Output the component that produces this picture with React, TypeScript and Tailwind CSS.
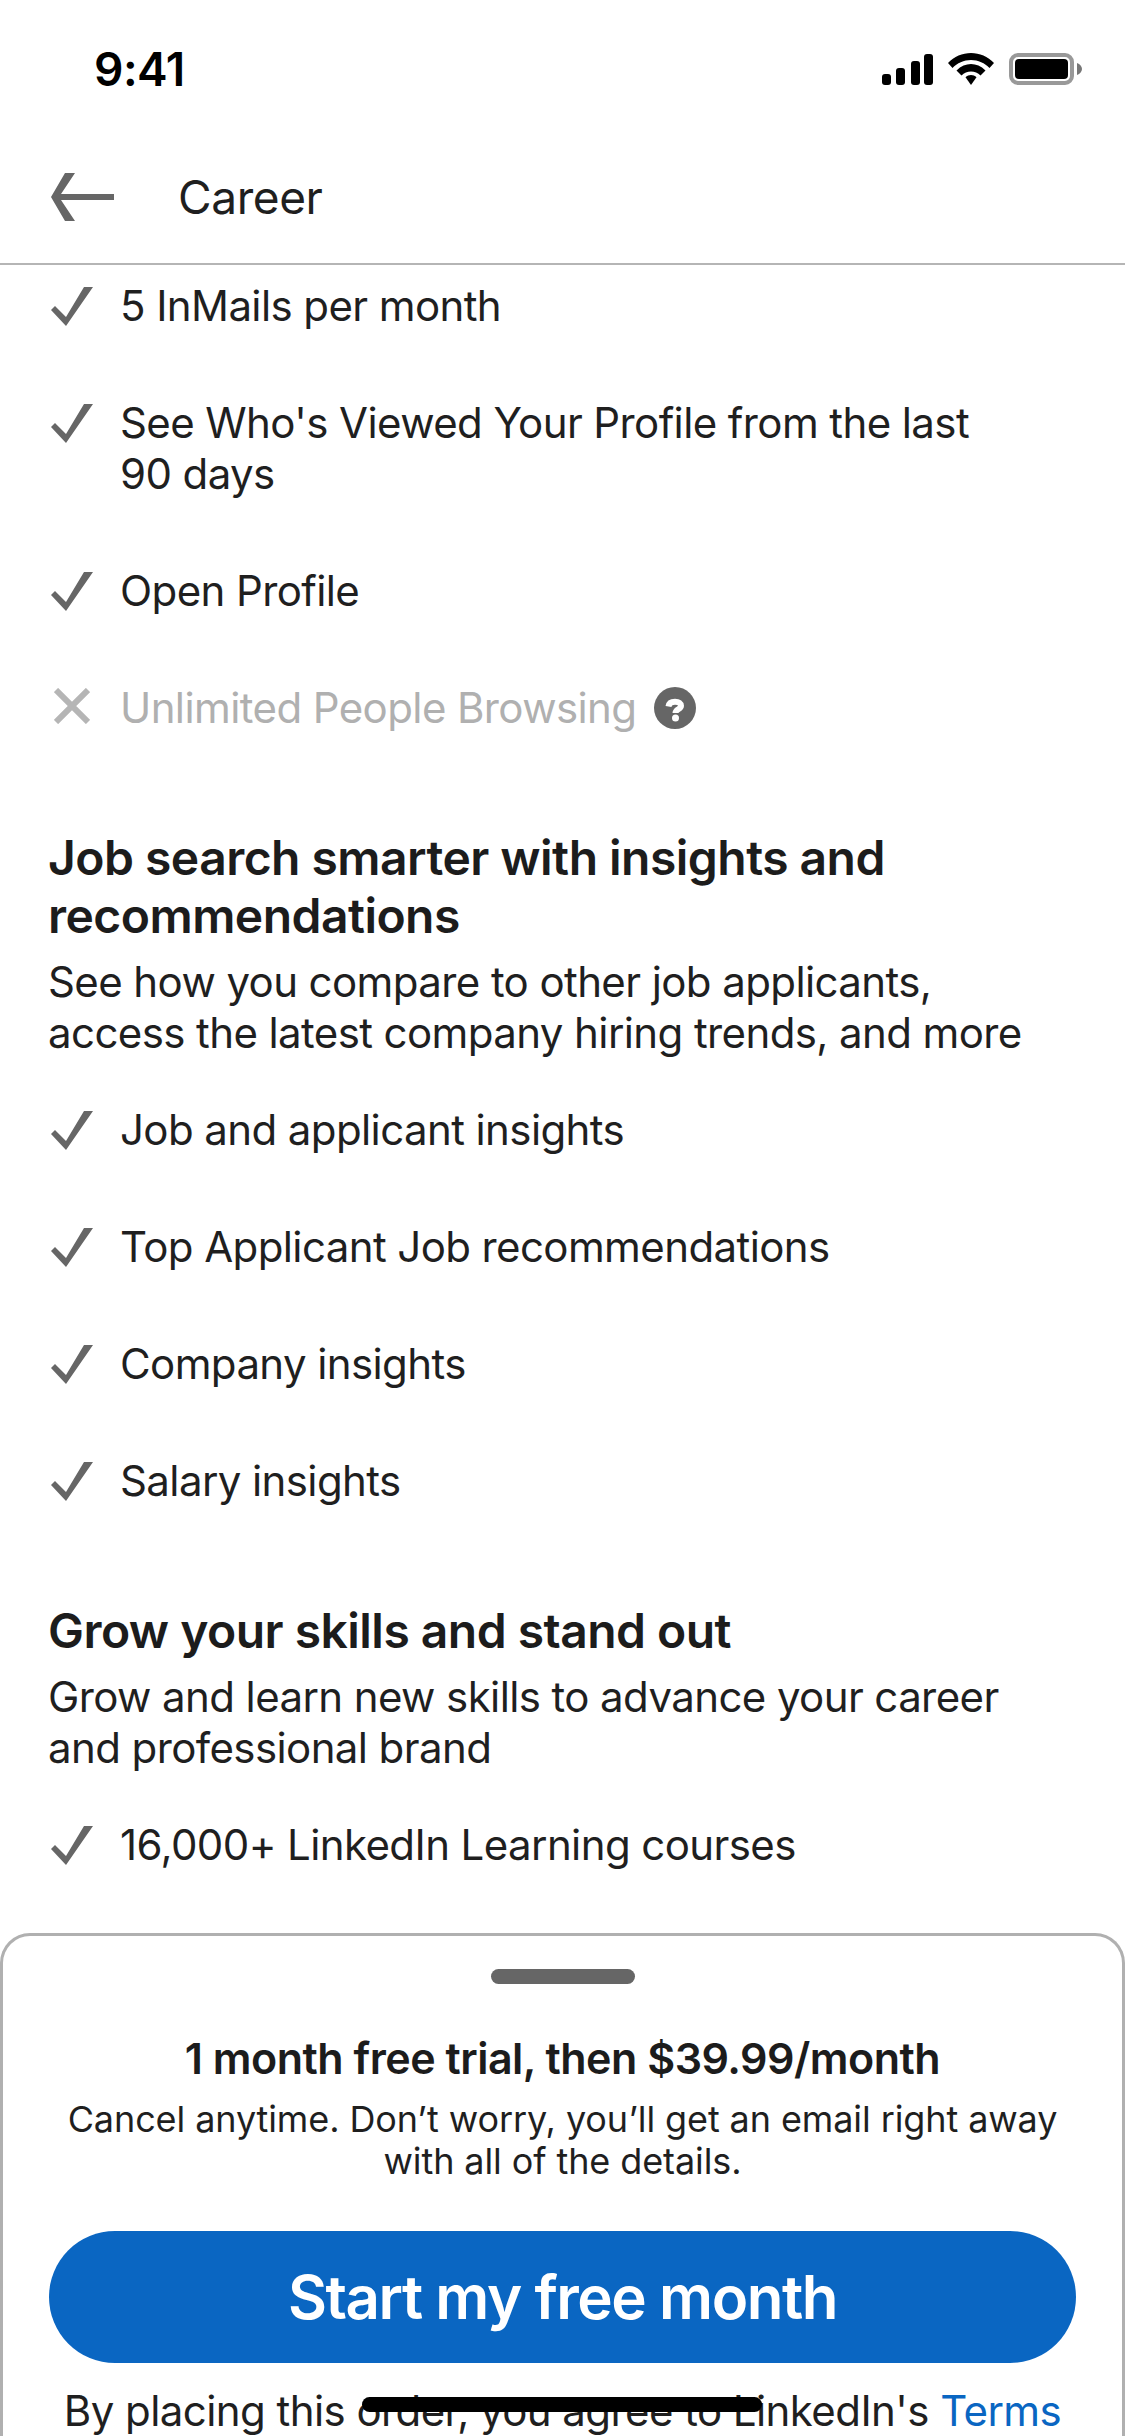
const Check = () => (
  <svg viewBox="0 0 42 39" className="mt-[7px] ml-[3px] h-[39px] w-[42px] shrink-0">
    <path d="M0 23 L4 19 L15 30 L33 0 L42 0 L15 39 Z" fill="#666666" />
  </svg>
);

const Cross = () => (
  <svg viewBox="0 0 36 36" className="mt-[6px] ml-[6px] h-[36px] w-[36px] shrink-0" fill="none">
    <path d="M2 2 L34 34 M34 2 L2 34" stroke="#b5b5b5" strokeWidth="6" />
  </svg>
);

const Help = () => (
  <svg viewBox="0 0 42 42" className="h-[42px] w-[42px] shrink-0">
    <circle cx="21" cy="21" r="21" fill="#666666" />
    <path
      d="M14.500 19.500 C15 16 17.500 14.800 21 14.800 C25 14.800 27 16.500 27 18.800 C27 22.500 21.500 22 21.500 26"
      fill="none"
      stroke="#ffffff"
      strokeWidth="6"
    />
    <circle cx="21.500" cy="31" r="3.500" fill="#ffffff" />
  </svg>
);

const Row = ({ children }: { children: React.ReactNode }) => (
  <div className="flex gap-[27px] text-[42px] leading-[51px] tracking-[-0.6px] text-[#1f1f1f]">
    <Check />
    <div>{children}</div>
  </div>
);

const Section = ({
  title,
  text,
  children,
}: {
  title: React.ReactNode;
  text: React.ReactNode;
  children: React.ReactNode;
}) => (
  <div className="mt-[96px]">
    <h2 className="text-[48px] leading-[58px] font-semibold tracking-[-0.53px] text-[#1c1c1c]">{title}</h2>
    <p className="mt-[11px] text-[42px] leading-[51px] tracking-[-0.6px] text-[#1f1f1f]">{text}</p>
    <div className="mt-[46px] flex flex-col gap-[66px]">{children}</div>
  </div>
);

export default function App() {
  return (
    <div className="relative flex h-[2436px] w-[1125px] flex-col overflow-hidden bg-white font-[Inter,sans-serif]">
      <div className="flex h-[138px] shrink-0 items-start justify-between pt-[46px] pr-[43px] pl-[94px]">
        <span className="text-[46px] leading-[46px] font-semibold tracking-[-0.5px] text-black">9:41</span>
        <div className="mt-[7px] flex items-center gap-[15px]">
          <svg viewBox="0 0 51 31" className="h-[31px] w-[51px]">
            <rect x="0" y="20" width="9" height="11" rx="3" />
            <rect x="14" y="14" width="9" height="17" rx="3" />
            <rect x="29" y="7" width="9" height="24" rx="3" />
            <rect x="42" y="0" width="9" height="31" rx="3" />
          </svg>
          <svg viewBox="0 0 46 32" className="h-[32px] w-[46px]">
            <path d="M23 0 C31.500 0 40 3.500 46 10 L41.500 15 C37 10 30 7 23 7 C16 7 9 10 4.500 15 L0 10 C6 3.500 14.500 0 23 0 Z" />
            <path d="M23 11 C28 11 33 13 37.500 17.500 L32.500 22.500 C30 20 26.500 18.500 23 18.500 C19.500 18.500 16 20 13.500 22.500 L8.500 17.500 C13 13 18 11 23 11 Z" />
            <path d="M23 22 C25 22 27 22.800 28.500 24.200 L23 32 L17.500 24.200 C19 22.800 21 22 23 22 Z" />
          </svg>
          <div className="flex items-center">
            <div className="flex h-[32px] w-[65px] items-center rounded-[9px] border-[4px] border-[#999999] p-[2px]">
              <div className="h-full w-full rounded-[4px] bg-black" />
            </div>
            <svg viewBox="0 0 5 12" className="ml-[3px] h-[12px] w-[5px]">
              <path d="M0 0 C3 1 5 3.500 5 6 C5 8.500 3 11 0 12 Z" fill="#777777" />
            </svg>
          </div>
        </div>
      </div>

      <header className="flex h-[127px] shrink-0 items-start border-b-2 border-[#b5b5b5] pl-[51px]">
        <svg viewBox="0 0 63 48" className="mt-[35px] h-[48px] w-[63px]">
          <path d="M0 24 L14 0 L24 0 L10 21 L63 21 L63 27 L10 27 L24 48 L14 48 Z" fill="#666666" />
        </svg>
        <span className="mt-[32px] ml-[64px] text-[46px] leading-[54px] tracking-[-0.4px] text-[#1f1f1f]">Career</span>
      </header>

      <main className="min-h-0 flex-1 overflow-hidden px-[48px] pt-[15px]">
        <div className="flex flex-col gap-[66px]">
          <Row>5 InMails per month</Row>
          <Row>
            See Who's Viewed Your Profile from the last
            <br />
            90 days
          </Row>
          <Row>Open Profile</Row>
          <div className="flex gap-[30px] text-[42px] leading-[51px] tracking-[-0.6px] text-[#b0b0b0]">
            <Cross />
            <div className="flex items-center gap-[18px]">
              Unlimited People Browsing
              <Help />
            </div>
          </div>
        </div>

        <Section
          title={
            <>
              Job search smarter with insights and
              <br />
              recommendations
            </>
          }
          text={
            <>
              See how you compare to other job applicants,
              <br />
              access the latest company hiring trends, and more
            </>
          }
        >
          <Row>Job and applicant insights</Row>
          <Row>Top Applicant Job recommendations</Row>
          <Row>Company insights</Row>
          <Row>Salary insights</Row>
        </Section>

        <Section
          title="Grow your skills and stand out"
          text={
            <>
              Grow and learn new skills to advance your career
              <br />
              and professional brand
            </>
          }
        >
          <Row>16,000+ LinkedIn Learning courses</Row>
        </Section>
      </main>

      <section className="flex h-[503px] shrink-0 flex-col items-center overflow-hidden rounded-t-[30px] border-x-[3px] border-t-[3px] border-[#b0b0b0] bg-white">
        <div className="mt-[33px] h-[18px] w-[144px] rounded-full bg-[#666666]" />
        <h3 className="mt-[49px] text-[43px] leading-[51px] font-semibold tracking-[-0.5px] text-[#1c1c1c]">
          1 month free trial, then $39.99/month
        </h3>
        <p className="mt-[14px] text-center text-[36px] leading-[42px] tracking-[-0.1px] text-[#1f1f1f]">
          Cancel anytime. Don’t worry, you’ll get an email right away
          <br />
          with all of the details.
        </p>
        <button className="mt-[49px] flex h-[132px] w-[1027px] shrink-0 items-center justify-center rounded-full bg-[#0a66c2] text-[60px] font-semibold tracking-[-1.45px] text-white">
          Start my free month
        </button>
        <p className="mt-[22px] text-[42px] leading-[51px] tracking-[-0.57px] whitespace-nowrap text-[#1f1f1f]">
          By placing this order, you agree to LinkedIn's <span className="text-[#0a66c2]">Terms</span>
        </p>
      </section>

      <div className="absolute top-[2397px] left-[362px] h-[15px] w-[400px] rounded-full bg-black" />
    </div>
  );
}
